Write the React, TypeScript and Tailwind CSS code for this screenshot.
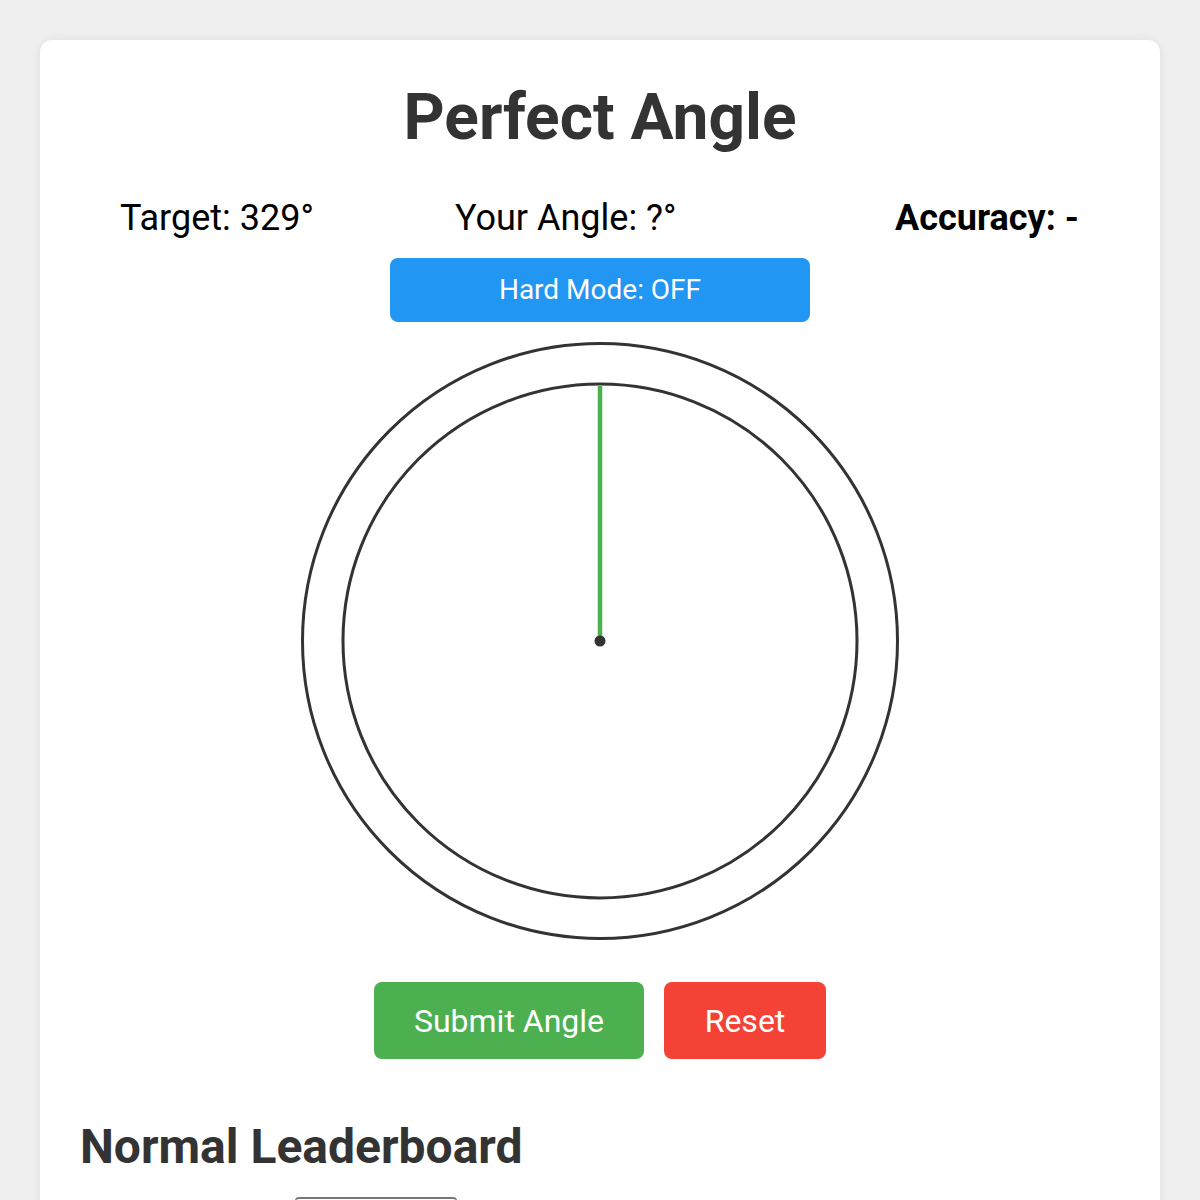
import { useState } from "react";

const AngleDial = ({ angle }: { angle: number }) => {
  const rad = ((angle - 90) * Math.PI) / 180;
  const x2 = 300 + 255 * Math.cos(rad);
  const y2 = 300 + 255 * Math.sin(rad);

  return (
    <svg width={600} height={600} viewBox="0 0 600 600" className="block">
      <circle cx={300} cy={300} r={297.5} fill="white" stroke="#333333" strokeWidth={3} />
      <circle cx={300} cy={300} r={257} fill="none" stroke="#333333" strokeWidth={3} />
      <line x1={300} y1={300} x2={x2} y2={y2} stroke="#4CAF50" strokeWidth={4.5} />
      <circle cx={300} cy={300} r={5.5} fill="#333333" />
    </svg>
  );
};

export default function App() {
  const [hardMode, setHardMode] = useState(false);
  const target = 329;

  return (
    <div className="min-h-screen bg-[#f0f0f0] px-10 pt-10 font-['Roboto',sans-serif]">
      <div className="rounded-xl bg-white px-10 pt-10 pb-10 shadow-[0_0_12px_rgba(0,0,0,0.08)] overflow-hidden h-[1200px]">
        <h1 className="text-center text-[64px] leading-[75px] font-bold text-[#333333]">
          Perfect Angle
        </h1>

        <div className="mt-[42px] grid grid-cols-[335px_1fr_auto] pl-10 pr-[41px] text-[36px] leading-[42px] text-black">
          <div>Target: {target}°</div>
          <div>Your Angle: ?°</div>
          <div className="font-bold">Accuracy: -</div>
        </div>

        <div className="mt-[19px] flex justify-center">
          <button
            onClick={() => setHardMode((prev) => !prev)}
            className="h-16 w-[420px] rounded-lg bg-[#2196F3] text-[28px] text-white"
          >
            Hard Mode: {hardMode ? "ON" : "OFF"}
          </button>
        </div>

        <div className="mt-[19px] flex justify-center">
          <AngleDial angle={0} />
        </div>

        <div className="mt-[41px] flex justify-center gap-5">
          <button className="h-[77px] w-[270px] rounded-lg bg-[#4CAF50] text-[32px] text-white">
            Submit Angle
          </button>
          <button className="h-[77px] w-[162px] rounded-lg bg-[#f44336] text-[32px] text-white">
            Reset
          </button>
        </div>

        <h2 className="mt-[60px] text-[48px] leading-[56px] font-bold text-[#333333]">
          Normal Leaderboard
        </h2>

        <div className="mt-[22px] flex">
          <div className="ml-[215px] h-10 w-[162px] rounded-t border-t-2 border-x border-[#777777]" />
        </div>
      </div>
    </div>
  );
}
